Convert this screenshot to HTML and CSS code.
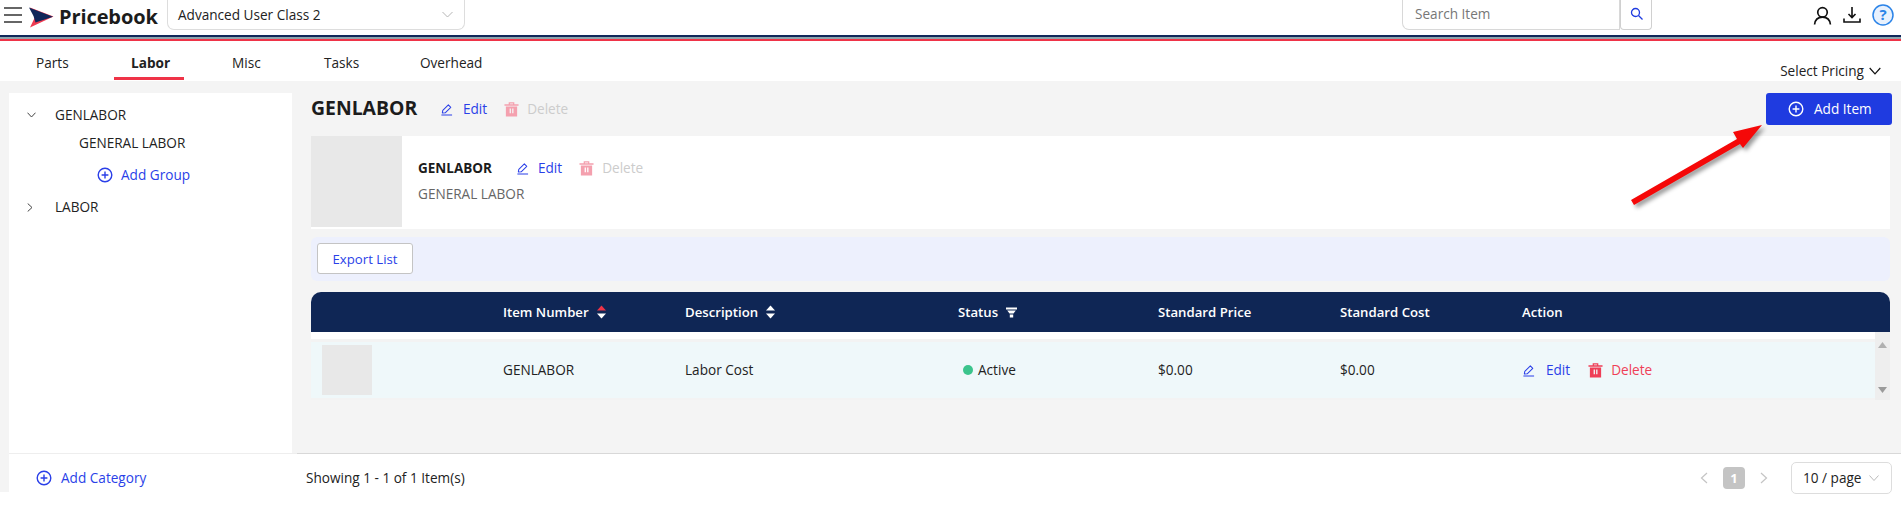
FILE: index.html
```html
<!DOCTYPE html>
<html lang="en">
<head>
<meta charset="utf-8">
<title>Pricebook</title>
<link rel="stylesheet" href="styles.css">
</head>
<body>
<svg class="defs" width="0" height="0" aria-hidden="true">
  <symbol id="plus" viewBox="0 0 16 16"><circle cx="8" cy="8" r="6.8" fill="none" stroke="currentColor" stroke-width="1.4"/><path d="M8 4.6v6.8M4.6 8h6.8" stroke="currentColor" stroke-width="1.4" fill="none"/></symbol>
  <symbol id="pen" viewBox="0 0 14 14"><path d="M1.5 13h11.5M2.5 10.8 3 8l6-6 2.6 2.6-6 6z" fill="none" stroke="currentColor" stroke-width="1.1" stroke-linejoin="round"/></symbol>
  <symbol id="trash" viewBox="0 0 16 16"><path d="M0.5 3h15v1.6H.5zM5 3V.8h6V3h-1.3V2H6.300V3zM2 5.400h12V16H2z M6 7.500v5h1.400v-5z M8.700 7.500v5h1.400v-5z" fill="currentColor" fill-rule="evenodd"/></symbol>
  <symbol id="updown" viewBox="0 0 9 14"><path d="M4.500 .5 9 5.500H0z" fill="var(--up,#fff)"/><path d="M0 8.500h9L4.500 13.500z" fill="#fff"/></symbol>
</svg>

<header class="topbar">
  <div class="burger"><i></i><i></i><i></i></div>
  <svg class="logo" width="25" height="21" viewBox="0 0 25 21"><path d="M1 .5 24.500 9.500 1 20.500 6 10z" fill="#ef3c52"/><path d="M0 .500 24 9.800 6.500 15.500 4.500 9z" fill="#10275a"/></svg>
  <span class="brand">Pricebook</span>
  <div class="class-select"><span>Advanced User Class 2</span>
    <svg class="chev" width="11" height="7" viewBox="0 0 11 7"><path d="M.5 1 5.500 6l5-5" fill="none" stroke="#b5b5b5"/></svg>
  </div>
  <div class="search">
    <span class="search-text">Search Item</span>
    <span class="search-btn"><svg width="13" height="13" viewBox="0 0 13 13"><circle cx="5.500" cy="5.500" r="4" fill="none" stroke="#1f3be0" stroke-width="1.300"/><path d="m8.500 8.500 4 4" stroke="#1f3be0" stroke-width="1.300"/></svg></span>
  </div>
  <div class="top-icons">
    <svg width="19" height="19" viewBox="0 0 18 18"><circle cx="9" cy="6" r="4.500" fill="none" stroke="#111" stroke-width="1.600"/><path d="M1.500 17.500c.5-5 3-7 7.500-7s7 2 7.500 7" fill="none" stroke="#111" stroke-width="1.600"/></svg>
    <svg width="18" height="18" viewBox="0 0 18 18"><path d="M9 1v10.500M5.500 8 9 11.500 12.500 8M1 12.500v3.500h16v-3.500" fill="none" stroke="#111" stroke-width="1.600"/></svg>
    <svg width="22" height="22" viewBox="0 0 22 22"><circle cx="11" cy="11" r="10" fill="#e8f1fd" stroke="#2c84e8" stroke-width="1.500"/><text x="11" y="16" class="help">?</text></svg>
  </div>
</header>
<div class="stripes"></div>

<nav class="tabs">
  <a class="tab tab-parts">Parts</a>
  <a class="tab tab-labor">Labor</a>
  <a class="tab tab-misc">Misc</a>
  <a class="tab tab-tasks">Tasks</a>
  <a class="tab tab-over">Overhead</a>
  <span class="pricing">Select Pricing
    <svg width="12" height="8" viewBox="0 0 12 8"><path d="M.700 1 6 6.800 11.300 1" fill="none" stroke="#111" stroke-width="1.200"/></svg>
  </span>
</nav>

<div class="shell">
  <aside class="side">
    <div class="tree-row root"><svg width="9" height="6" viewBox="0 0 9 6"><path d="M.500.700 4.500 5 8.500.700" fill="none" stroke="#444"/></svg><span>GENLABOR</span></div>
    <div class="tree-row child">GENERAL LABOR</div>
    <a class="link add-group"><svg width="16" height="16"><use href="#plus"/></svg>Add Group</a>
    <div class="tree-row root"><svg width="6" height="9" viewBox="0 0 6 9"><path d="M.700.500 5 4.500.700 8.500" fill="none" stroke="#444"/></svg><span>LABOR</span></div>
  </aside>
  <main class="content">
    <div class="title-row">
      <h1>GENLABOR</h1>
      <a class="link act"><svg width="13" height="13"><use href="#pen"/></svg>Edit</a>
      <a class="muted act"><svg width="15" height="16"><use href="#trash"/></svg>Delete</a>
      <button class="add-item"><svg width="16" height="16"><use href="#plus"/></svg>Add Item</button>
    </div>
    <section class="card">
      <div class="thumb-lg"></div>
      <div class="card-body">
        <div class="card-line">
          <strong>GENLABOR</strong>
          <a class="link act"><svg width="13" height="13"><use href="#pen"/></svg>Edit</a>
          <a class="muted act"><svg width="15" height="16"><use href="#trash"/></svg>Delete</a>
        </div>
        <div class="card-sub">GENERAL LABOR</div>
      </div>
    </section>
    <div class="export-bar"><button class="export">Export List</button></div>
    <div class="table">
      <div class="thead">
        <span class="c1"></span>
        <span class="c2">Item Number <svg class="sort red" width="9" height="14"><use href="#updown"/></svg></span>
        <span class="c3">Description <svg class="sort" width="9" height="14"><use href="#updown"/></svg></span>
        <span class="c4">Status <svg class="sort" width="11" height="11" viewBox="0 0 11 10"><path d="M0 0h11v2H0zM1.200 3h8.600L7.500 6h-4zM3.800 7h3.400v3H3.800z" fill="#fff"/></svg></span>
        <span class="c5">Standard Price</span>
        <span class="c6">Standard Cost</span>
        <span class="c7">Action</span>
      </div>
      <div class="tbody">
        <div class="rows">
          <div class="spacer"></div>
          <div class="trow">
            <span class="c1"><i class="thumb"></i></span>
            <span class="c2">GENLABOR</span>
            <span class="c3">Labor Cost</span>
            <span class="c4"><i class="dot"></i>Active</span>
            <span class="c5">$0.00</span>
            <span class="c6">$0.00</span>
            <span class="c7 actions">
              <a class="link act"><svg width="13" height="13"><use href="#pen"/></svg>Edit</a>
              <a class="danger act"><svg width="15" height="16"><use href="#trash"/></svg>Delete</a>
            </span>
          </div>
        </div>
        <div class="scrollbar">
          <svg width="9" height="6" viewBox="0 0 9 6"><path d="M4.500 0 9 6H0z" fill="#b0b0b0"/></svg>
          <svg width="9" height="6" viewBox="0 0 9 6"><path d="M0 0h9L4.500 6z" fill="#9a9a9a"/></svg>
        </div>
      </div>
    </div>
  </main>
</div>

<footer class="footer">
  <div class="foot-left">
    <a class="link add-cat"><svg width="16" height="16"><use href="#plus"/></svg>Add Category</a>
  </div>
  <div class="foot-right">
    <span class="showing">Showing 1 - 1 of 1 Item(s)</span>
    <div class="pager">
      <svg width="8" height="12" viewBox="0 0 8 12"><path d="M7 1 1.500 6 7 11" fill="none" stroke="#c4c4c4" stroke-width="1.200"/></svg>
      <b class="page">1</b>
      <svg width="8" height="12" viewBox="0 0 8 12"><path d="M1 1l5.500 5L1 11" fill="none" stroke="#c4c4c4" stroke-width="1.200"/></svg>
      <div class="per-page">10 / page <svg width="10" height="6" viewBox="0 0 10 6"><path d="M.500.500 5 5.500 9.500.500" fill="none" stroke="#bbb"/></svg></div>
    </div>
  </div>
</footer>

<svg class="arrow" width="145" height="95" viewBox="0 0 145 95">
  <path d="M3 80 109 19 105 12 134 5 115 28 112 24 6 85z" fill="#f50808"/>
</svg>
</body>
</html>
```
FILE: styles.css
```css
* { box-sizing: border-box; }
html, body { margin: 0; height: 508px; overflow: hidden; background: #fff; }
body { position: relative; font: 13.6px/18px "Open Sans", "Noto Sans", sans-serif; color: #222; }
.defs { position: absolute; }
svg { flex: none; display: block; }
a { cursor: pointer; }
button { font: inherit; cursor: pointer; }

.topbar { height: 35px; display: flex; align-items: center; padding: 0 0 5px 4px; }
.burger { width: 18px; display: flex; flex-direction: column; gap: 5px; }
.burger i { height: 2px; background: #666; display: block; }
.logo { margin: 0 0 0 7px; position: relative; top: 2px; }
.brand { margin-left: 5px; font-size: 20px; font-weight: 700; color: #1c1c1c; width: 108px; letter-spacing: -.1px; position: relative; top: 2px; }
.class-select { width: 298px; height: 30px; padding: 0 11px 0 10px; border: 1px solid #ddd; border-top: 0; border-radius: 0 0 7px 7px; display: flex; align-items: center; justify-content: space-between; }
.search { margin-left: auto; display: flex; height: 30px; }
.search-text { width: 218px; padding: 0 12px; line-height: 27px; color: #777; border: 1px solid #d8d8d8; border-top: 0; border-radius: 0 0 0 7px; }
.search-btn { width: 32px; display: flex; align-items: center; justify-content: center; border: 1px solid #d0d0d0; border-top: 0; border-radius: 0 0 4px 4px; padding-bottom: 3px; }
.top-icons { width: 249px; padding-right: 7px; display: flex; justify-content: flex-end; align-items: center; gap: 11px; }

.stripes { height: 6px; background: linear-gradient(#10275a 0 2px, #8fa5ad 2px 4px, #ef3347 4px 6px); }

.tabs { height: 40px; display: flex; position: relative; padding-left: 36px; align-items: flex-start; }
.tab { display: block; height: 39px; padding-top: 13px; color: #222; }
.tab-parts { width: 78px; }
.tab-labor { width: 70px; margin-right: 48px; padding-left: 17px; font-weight: 700; border-bottom: 3px solid #ef3347; height: 39px; }
.tab-misc { width: 92px; }
.tab-tasks { width: 96px; }
.pricing { margin-left: auto; margin-top: 21px; margin-right: 20px; display: flex; align-items: center; gap: 5px; color: #222; }

.shell { height: 372px; background: #f4f4f4; display: flex; padding-left: 9px; padding-top: 12px; }
.side { width: 283px; height: 360px; background: #fff; padding: 8px 0 0 18px; flex: none; }
.tree-row { height: 28px; display: flex; align-items: center; }
.tree-row.root { position: relative; }
.tree-row.root span { position: absolute; left: 28px; }
.child { padding-left: 52px; }
.link { color: #2a3fe8; }
.muted { color: #ccc; }
.muted svg { color: #f4a0ae; }
.danger { color: #ef3f57; }
.add-group { display: flex; align-items: center; gap: 8px; height: 36px; padding-left: 70px; }

.content { flex: 1; padding-left: 19px; padding-right: 11px; min-width: 0; }
.title-row { display: flex; align-items: flex-start; gap: 22px; height: 43px; }
h1 { margin: 0; font-size: 19.4px; line-height: 30px; font-weight: 700; color: #1c1c1c; width: 107px; white-space: nowrap; }
.act { display: inline-flex; align-items: center; gap: 10px; }
.act.muted, .act.danger { gap: 8px; }
.title-row .act { margin-top: 7px; }
.title-row .act.muted { margin-left: -5px; }
.add-item { margin-left: auto; margin-right: -2px; width: 126px; height: 32px; display: flex; align-items: center; padding: 0 0 0 22px; gap: 10px; color: #fff; background: #1f3be0; border: 0; border-radius: 3px; }
.card { height: 93px; background: #fff; display: flex; }
.thumb-lg { width: 91px; height: 91px; background: #e8e8e8; }
.card-body { padding: 20px 0 0 16px; }
.card-line { display: flex; align-items: center; gap: 24px; height: 24px; }
.card-line .act { gap: 9px; }
.card-line .muted { margin-left: -7px; gap: 8px; }
.card-line strong { font-size: 13.5px; color: #1c1c1c; width: 74px; white-space: nowrap; }
.card-sub { color: #666; margin-top: 5px; }
.export-bar { margin-top: 8px; height: 44px; background: #edf0fd; border-radius: 6px; padding: 6px; }
.export { width: 96px; height: 31px; background: #fff; color: #2a3fe8; border: 1px solid #c4c4c4; border-radius: 3px; padding: 0; font-size: 13.2px; }
.table { margin-top: 11px; }
.thead { height: 40px; background: #0f2655; color: #fff; border-radius: 10px 10px 0 0; display: flex; align-items: center; font-weight: 600; font-size: 13.2px; }
.thead span, .trow > span { display: flex; align-items: center; flex: none; }
.thead .sort { margin-left: 8px; }
.red { --up: #ef3347; }
.c1 { width: 192px; }
.c2 { width: 182px; }
.c3 { width: 273px; }
.c4 { width: 200px; }
.c5 { width: 182px; }
.c6 { width: 182px; }
.c7 { width: auto; }
.tbody { display: flex; height: 68px; }
.rows { flex: 1; background: #f3f3f3; }
.spacer { height: 7px; background: #fff; }
.trow { margin-top: 3px; height: 56px; background: #eff8fa; display: flex; align-items: center; }
.trow .c1 { padding-left: 11px; }
.thumb { width: 50px; height: 50px; background: #e8e8e8; display: block; }
.dot { width: 10px; height: 10px; border-radius: 50%; background: #3bc48c; margin: 0 5px; }
.actions { gap: 18px; }
.actions .link { gap: 11px; }
.scrollbar { width: 15px; background: #eee; display: flex; flex-direction: column; align-items: center; justify-content: space-between; padding: 10px 0 7px; }

.footer { height: 39px; display: flex; padding-left: 9px; background: linear-gradient(to right, #f4f4f4 9px, #fff 9px); }
.foot-left { width: 288px; border-top: 1px solid #eee; flex: none; }
.foot-right { flex: 1; border-top: 1px solid #d8d8d8; display: flex; align-items: flex-start; padding: 8px 9px 0 9px; }
.add-cat { display: flex; align-items: center; gap: 9px; padding: 15px 0 0 27px; }
.showing { padding-top: 7px; }
.pager { margin-left: auto; display: flex; align-items: center; gap: 16px; height: 32px; }
.page { width: 22px; height: 22px; background: #c4c4c4; color: #fff; border-radius: 4px; font-size: 13px; text-align: center; line-height: 22px; margin: 0 -1px 0 -1px; }
.per-page { margin-left: 7px; width: 101px; height: 32px; border: 1px solid #ddd; border-radius: 5px; display: flex; align-items: center; gap: 8px; padding-left: 11px; }
.help { font: 700 15px "Open Sans", sans-serif; fill: #2c84e8; text-anchor: middle; }
.arrow { position: absolute; left: 1628px; top: 120px; filter: drop-shadow(3px 3px 2px rgba(0,0,0,.4)); }
```
